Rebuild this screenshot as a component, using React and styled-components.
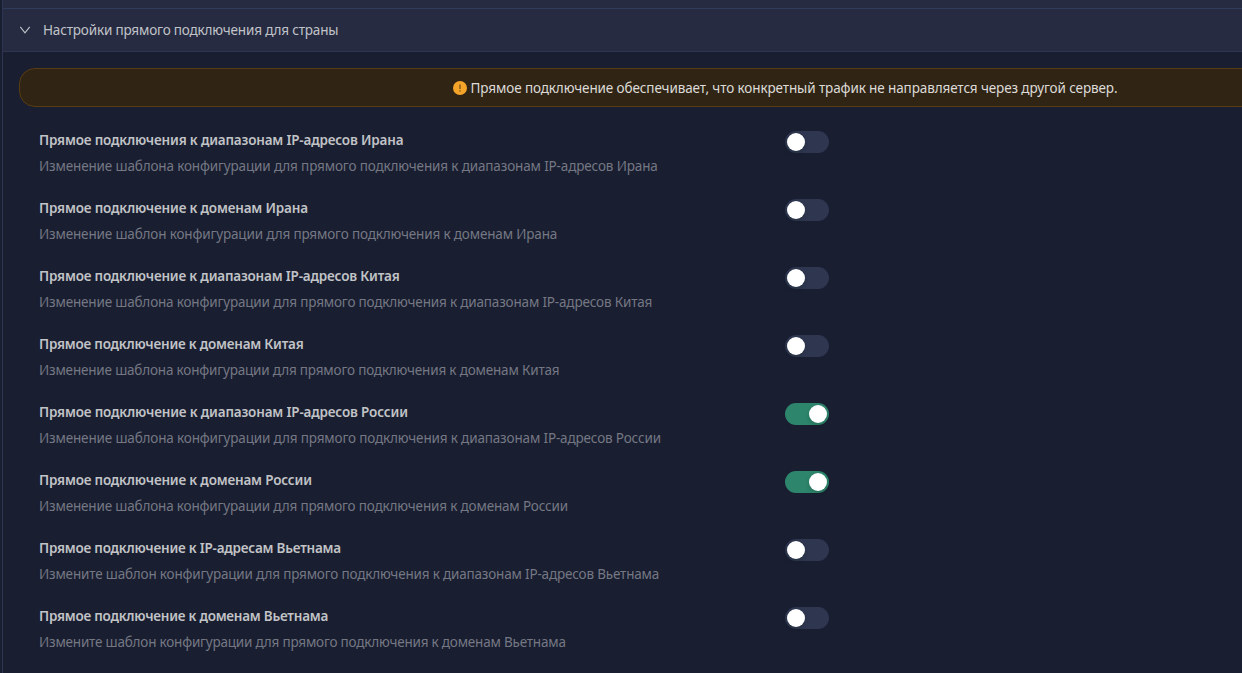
import React from "react";
import styled, { createGlobalStyle } from "styled-components";

const GlobalStyle = createGlobalStyle`
  * { box-sizing: border-box; }
  body {
    margin: 0;
    overflow: hidden;
    background: #191e31;
    font-family: "Segoe UI", "Noto Sans", sans-serif;
    font-size: 13.5px;
    line-height: 22px;
  }
`;

const Collapse = styled.div`
  width: 1568px;
  height: 673px;
  margin-left: 2px;
  border-left: 1px solid #2c3650;
  overflow: hidden;
`;

const PreviousHeader = styled.div`
  height: 9px;
  background: #262b41;
  border-bottom: 1px solid #2f3b5a;
`;

const Header = styled.div`
  display: flex;
  align-items: center;
  gap: 12px;
  height: 43px;
  padding: 0 16px;
  background: #262b41;
  border-bottom: 1px solid #2c3650;
  color: #c1c3c9;
  letter-spacing: -0.17px;
`;

const Chevron = styled.svg`
  width: 12px;
  height: 12px;
`;

const Panel = styled.div`
  padding: 16px;
`;

const Alert = styled.div`
  display: flex;
  align-items: center;
  justify-content: center;
  gap: 4px;
  width: 1532px;
  height: 39px;
  margin-bottom: 12px;
  border: 1px solid #593c11;
  border-radius: 16px;
  background: #302415;
  color: #dddbd7;
  letter-spacing: -0.11px;
`;

const AlertIcon = styled.svg`
  width: 14px;
  height: 14px;
`;

const Row = styled.div`
  display: grid;
  grid-template-columns: 746px 1fr;
  width: 1532px;
  height: 68px;
  padding: 10px 20px;
`;

const Title = styled.div`
  margin-bottom: 4px;
  color: #c1c3c6;
  font-weight: 600;
  letter-spacing: ${(p) => p.$spacing}px;
  white-space: nowrap;
`;

const Description = styled.div`
  color: #757883;
  letter-spacing: ${(p) => p.$spacing}px;
  white-space: nowrap;
`;

const Switch = styled.button`
  display: flex;
  justify-content: ${(p) => (p.$on ? "flex-end" : "flex-start")};
  width: 44px;
  height: 22px;
  margin: 2px 0 0;
  padding: 2px;
  border: 0;
  border-radius: 11px;
  background: ${(p) => (p.$on ? "#2d856c" : "#2e3650")};
`;

const Knob = styled.span`
  width: 18px;
  height: 18px;
  border-radius: 9px;
  background: #fff;
  box-shadow: 0 2px 4px rgba(0, 35, 11, 0.2);
`;

const settings = [
  { title: "Прямое подключения к диапазонам IP-адресов Ирана", text: "Изменение шаблона конфигурации для прямого подключения к диапазонам IP-адресов Ирана", titleSpacing: -0.18, textSpacing: -0.145 },
  { title: "Прямое подключение к доменам Ирана", text: "Изменение шаблон конфигурации для прямого подключения к доменам Ирана", titleSpacing: -0.18, textSpacing: -0.155 },
  { title: "Прямое подключение к диапазонам IP-адресов Китая", text: "Изменение шаблона конфигурации для прямого подключения к диапазонам IP-адресов Китая", titleSpacing: -0.19, textSpacing: -0.17 },
  { title: "Прямое подключение к доменам Китая", text: "Изменение шаблона конфигурации для прямого подключения к доменам Китая", titleSpacing: -0.22, textSpacing: -0.18 },
  { title: "Прямое подключение к диапазонам IP-адресов России", text: "Изменение шаблона конфигурации для прямого подключения к диапазонам IP-адресов России", titleSpacing: -0.17, textSpacing: -0.155, on: true },
  { title: "Прямое подключение к доменам России", text: "Изменение шаблона конфигурации для прямого подключения к доменам России", titleSpacing: -0.19, textSpacing: -0.165, on: true },
  { title: "Прямое подключение к IP-адресам Вьетнама", text: "Измените шаблон конфигурации для прямого подключения к диапазонам IP-адресов Вьетнама", titleSpacing: -0.22, textSpacing: -0.18 },
  { title: "Прямое подключение к доменам Вьетнама", text: "Измените шаблон конфигурации для прямого подключения к доменам Вьетнама", titleSpacing: -0.235, textSpacing: -0.2 },
];

export default function App() {
  return (
    <>
      <GlobalStyle />
      <Collapse>
        <PreviousHeader />
        <Header>
          <Chevron viewBox="0 0 12 12" fill="none" stroke="currentColor" strokeWidth="1.1">
            <path d="M1.3 2.8 6 8.8 10.7 2.8" />
          </Chevron>
          <span>Настройки прямого подключения для страны</span>
        </Header>
        <Panel>
          <Alert>
            <AlertIcon viewBox="0 0 14 14">
              <circle cx="7" cy="7" r="7" fill="#f5a42a" />
              <path d="M7 3.5v4.4M7 9.2v1.4" stroke="#69491a" strokeWidth="1.2" />
            </AlertIcon>
            <span>Прямое подключение обеспечивает, что конкретный трафик не направляется через другой сервер.</span>
          </Alert>
          {settings.map(({ title, text, titleSpacing, textSpacing, on = false }) => (
            <Row key={title}>
              <div>
                <Title $spacing={titleSpacing}>{title}</Title>
                <Description $spacing={textSpacing}>{text}</Description>
              </div>
              <Switch $on={on} role="switch" aria-checked={on} aria-label={title}>
                <Knob />
              </Switch>
            </Row>
          ))}
        </Panel>
      </Collapse>
    </>
  );
}
